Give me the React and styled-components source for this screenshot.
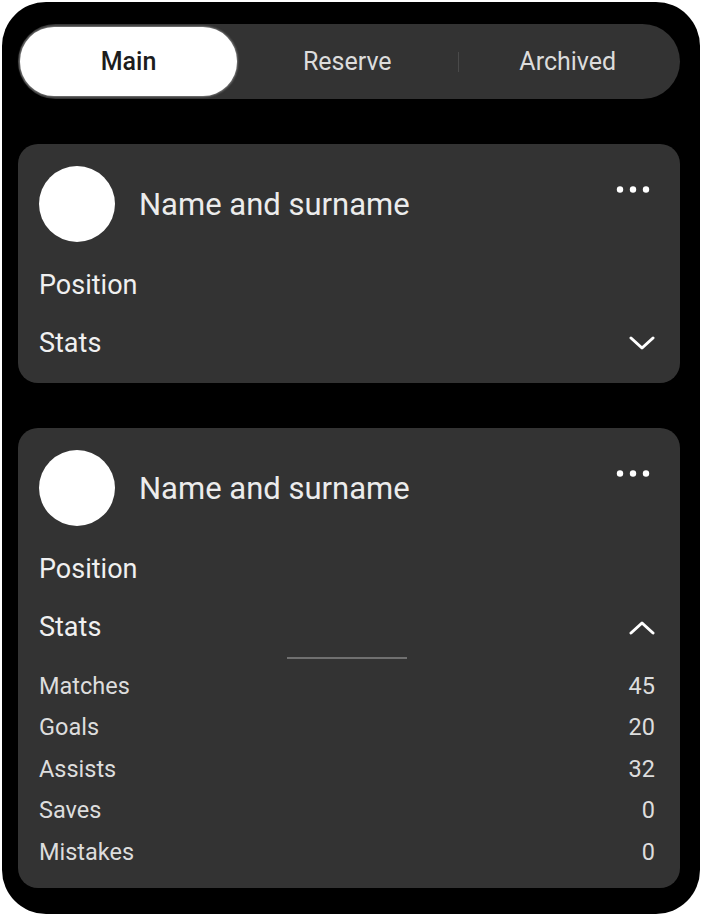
import React from 'react';
import styled, { createGlobalStyle } from "styled-components"

const GlobalStyle = createGlobalStyle`
    body {
        margin: 0;
        background: #ffffff;
        font-family: Roboto, "Liberation Sans", sans-serif;
    }
`;

const Frame = styled.div`
    margin: 2px;
    width: 698px;
    height: 912px;
    box-sizing: border-box;
    background: #000;
    border-radius: 44px;
    padding: 22px 20px 0 16px;
    display: flex;
    flex-direction: column;
    gap: 45px;
`;

const TabBar = styled.div`
    height: 75px;
    box-sizing: border-box;
    padding: 3px 2px;
    background: #333333;
    border-radius: 38px;
    display: grid;
    grid-template-columns: 217px 1fr 1fr;
`;

const Tab = styled.div`
    position: relative;
    display: flex;
    align-items: center;
    justify-content: center;
    border-radius: 34px;
    font-size: 25px;
    font-weight: ${p => p.$active ? 500 : 400};
    color: ${p => p.$active ? '#1c1c1c' : '#dcdcdc'};
    background: ${p => p.$active ? '#ffffff' : 'transparent'};
    box-shadow: ${p => p.$active ? '0 0 2px 1px rgba(170,170,170,0.6)' : 'none'};

    &::before {
        content: "";
        display: ${p => p.$divider ? 'block' : 'none'};
        position: absolute;
        left: 0;
        top: 50%;
        width: 1px;
        height: 20px;
        transform: translateY(-50%);
        background: #4a4a4a;
    }
`;

const Card = styled.div`
    background: #333333;
    border-radius: 20px;
    padding: 22px 25px 11px 21px;
    color: #efefef;
`;

const Header = styled.div`
    display: flex;
    align-items: center;
    height: 76px;
`;

const Avatar = styled.div`
    width: 76px;
    height: 76px;
    border-radius: 50%;
    background: #fff;
    flex-shrink: 0;
`;

const Name = styled.span`
    flex: 1;
    margin-left: 24px;
    font-size: 31px;
    color: #ececec;
`;

const MoreButton = styled.div`
    align-self: flex-start;
    margin-top: 20px;
    margin-right: 5px;
    display: flex;
`;

const Body = styled.div`
    margin-top: 14px;
`;

const Row = styled.div`
    height: 58px;
    display: flex;
    align-items: center;
    justify-content: space-between;
    font-size: 27px;
    color: #f0f0f0;
`;

const Handle = styled.div`
    width: 120px;
    height: 2px;
    margin: 1px auto 0;
    background: #707070;
`;

const StatList = styled.div`
    margin-top: 6px;
    margin-bottom: 4px;
`;

const StatRow = styled.div`
    height: 41.5px;
    display: flex;
    align-items: center;
    justify-content: space-between;
    font-size: 23.5px;
    color: #dddddd;
`;

const Dots = () => (
    <svg width="34" height="7" viewBox="0 0 34 7">
        <circle cx="4" cy="3.5" r="3.2" fill="#fff" />
        <circle cx="17" cy="3.5" r="3.2" fill="#fff" />
        <circle cx="30" cy="3.5" r="3.2" fill="#fff" />
    </svg>
);

const Chevron = ({ up }) => (
    <svg width="26" height="15" viewBox="0 0 26 15">
        <path
            d={up ? "M2 13 L13 3 L24 13" : "M2 2 L13 12 L24 2"}
            fill="none"
            stroke="#fff"
            strokeWidth="3"
            strokeLinecap="round"
            strokeLinejoin="round"
        />
    </svg>
);

const stats = [
    { label: 'Matches', value: 45 },
    { label: 'Goals', value: 20 },
    { label: 'Assists', value: 32 },
    { label: 'Saves', value: 0 },
    { label: 'Mistakes', value: 0 },
];

const PlayerCard = ({ open }) => (
    <Card>
        <Header>
            <Avatar />
            <Name>Name and surname</Name>
            <MoreButton><Dots /></MoreButton>
        </Header>
        <Body>
            <Row>Position</Row>
            <Row>
                Stats
                <Chevron up={open} />
            </Row>
        </Body>
        {open && (
            <>
                <Handle />
                <StatList>
                    {stats.map(s => (
                        <StatRow key={s.label}>
                            <span>{s.label}</span>
                            <span>{s.value}</span>
                        </StatRow>
                    ))}
                </StatList>
            </>
        )}
    </Card>
);

const App = () => {
    return (
        <>
            <GlobalStyle />
            <Frame>
                <TabBar>
                    <Tab $active>Main</Tab>
                    <Tab>Reserve</Tab>
                    <Tab $divider>Archived</Tab>
                </TabBar>
                <PlayerCard />
                <PlayerCard open />
            </Frame>
        </>
    );
};

export default App;
